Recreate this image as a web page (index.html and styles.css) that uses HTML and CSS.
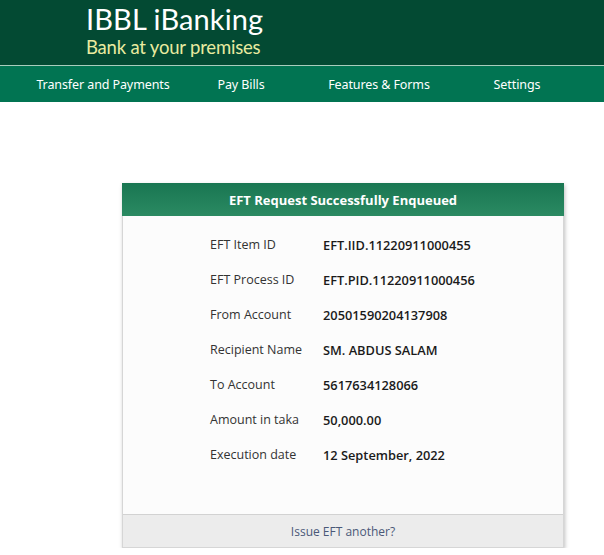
FILE: index.html
```html
<!DOCTYPE html>
<html>
<head>
<meta charset="utf-8">
<link rel="stylesheet" href="styles.css">
</head>
<body>
<header class="brand">
  <div class="brand-title">IBBL iBanking</div>
  <div class="brand-sub">Bank at your premises</div>
</header>
<nav class="menu">
  <a class="menu-item">Transfer and Payments</a>
  <a class="menu-item">Pay Bills</a>
  <a class="menu-item">Features &amp; Forms</a>
  <a class="menu-item">Settings</a>
</nav>
<main class="content">
  <section class="card">
    <div class="card-head">EFT Request Successfully Enqueued</div>
    <div class="card-body">
      <div class="row"><span class="label">EFT Item ID</span><span class="value">EFT.IID.11220911000455</span></div>
      <div class="row"><span class="label">EFT Process ID</span><span class="value">EFT.PID.11220911000456</span></div>
      <div class="row"><span class="label">From Account</span><span class="value">20501590204137908</span></div>
      <div class="row"><span class="label">Recipient Name</span><span class="value">SM. ABDUS SALAM</span></div>
      <div class="row"><span class="label">To Account</span><span class="value">5617634128066</span></div>
      <div class="row"><span class="label">Amount in taka</span><span class="value">50,000.00</span></div>
      <div class="row"><span class="label">Execution date</span><span class="value">12 September, 2022</span></div>
    </div>
    <div class="card-foot"><a class="foot-link">Issue EFT another?</a></div>
  </section>
</main>
</body>
</html>
```
FILE: styles.css
```css
html, body {
  margin: 0;
  padding: 0;
  background: #ffffff;
  font-family: "Open Sans", "Noto Sans", sans-serif;
}
.brand {
  background: #034a33;
  height: 66px;
  padding-left: 86px;
  box-sizing: border-box;
  padding-top: 2px;
  border-bottom: 1px solid #a9cdbd;
}
.brand-title {
  color: #ffffff;
  font-family: "Lato", "Open Sans", sans-serif;
  font-size: 29px;
  line-height: 34px;
  letter-spacing: 0.1px;
}
.brand-sub {
  color: #e9eba0;
  font-family: "Lato", "Open Sans", sans-serif;
  font-size: 18.5px;
  line-height: 24px;
  margin-top: -1px;
  letter-spacing: -0.2px;
}
.menu {
  background: #017452;
  height: 36px;
  display: flex;
  align-items: center;
  padding-left: 34px;
}
.menu-item {
  width: 138px;
  text-align: center;
  color: #ffffff;
  font-family: "Noto Sans", "Open Sans", sans-serif;
  font-size: 12.5px;
  letter-spacing: -0.1px;
}
.content {
  padding-top: 81px;
  padding-left: 122px;
}
.card {
  width: 442px;
  border: 1px solid #d6d6d6;
  box-sizing: border-box;
  box-shadow: 1px 2px 4px rgba(0,0,0,0.25);
  background: #fcfcfc;
}
.card-head {
  height: 33px;
  background: linear-gradient(#197652, #2b8a62);
  color: #ffffff;
  font-weight: 700;
  font-size: 13px;
  display: flex;
  align-items: center;
  justify-content: center;
  margin: -1px -1px 0;
}
.card-body {
  padding: 11px 0 0 87px;
  height: 298px;
  box-sizing: border-box;
}
.row {
  display: flex;
  height: 35px;
  align-items: center;
  font-size: 12.5px;
}
.label {
  width: 113px;
  color: #333333;
}
.value {
  color: #1a1a1a;
  font-weight: 600;
  font-size: 12.8px;
}
.card-foot {
  height: 32px;
  background: #ececec;
  border-top: 1px solid #d2d2d2;
  display: flex;
  align-items: center;
  justify-content: center;
}
.foot-link {
  color: #4a5878;
  font-size: 12px;
}
```
